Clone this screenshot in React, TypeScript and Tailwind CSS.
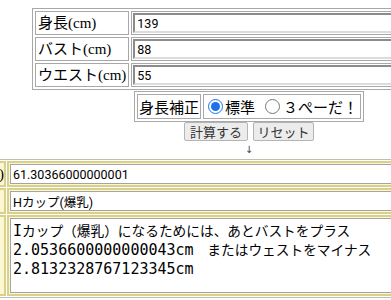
const fields: [string, string][] = [
  ["身長(cm)", "139"],
  ["バスト(cm)", "88"],
  ["ウエスト(cm)", "55"],
];

function J({ children }: { children: React.ReactNode }) {
  return <span className="text-[13.7px]">{children}</span>;
}

export default function App() {
  return (
    <div className="w-[391px] h-[300px] overflow-hidden bg-white text-black">
      <div className="w-[498px] flex flex-col items-center pt-[8px]">
        {/* input table */}
        <table className="w-[434px] border border-[#a8a8a8] border-separate border-spacing-[2px]">
          <tbody>
            {fields.map(([label, value]) => (
              <tr key={label}>
                <td className="w-[94px] h-[24px] border border-[#a8a8a8] px-[2px] py-0 whitespace-nowrap text-[15px] leading-[20px] font-['Liberation_Serif','Noto_Sans_CJK_JP',serif]">
                  {label}
                </td>
                <td className="h-[24px] border border-[#a8a8a8] p-[1px]">
                  <input
                    readOnly
                    value={value}
                    className="block w-full h-[20px] border-2 border-t-[#8c8c8c] border-l-[#8c8c8c] border-b-[#dcdcdc] border-r-[#dcdcdc] bg-white px-[2px] text-[12.5px] font-['Roboto','Noto_Sans_CJK_JP',sans-serif] outline-none"
                  />
                </td>
              </tr>
            ))}
          </tbody>
        </table>

        {/* height correction */}
        <table className="mt-[1px] border border-[#a8a8a8] border-separate border-spacing-[2px]">
          <tbody>
            <tr>
              <td className="h-[25px] border border-[#a8a8a8] px-[1px] py-0 whitespace-nowrap text-[15px] leading-[20px] font-['Noto_Sans_CJK_JP',sans-serif]">
                身長補正
              </td>
              <td className="h-[25px] border border-[#a8a8a8] pl-[4px] pr-[2px] py-0">
                <div className="flex items-center whitespace-nowrap text-[15px] leading-[20px] font-['Noto_Sans_CJK_JP',sans-serif]">
                  <input type="radio" name="hosei" defaultChecked className="w-[15px] h-[15px] m-0 accent-[#1a73e8]" />
                  <span className="ml-[2px]">標準</span>
                  <input type="radio" name="hosei" className="ml-[10px] w-[15px] h-[15px] m-0" />
                  <span className="ml-[3px]">３ぺーだ！</span>
                </div>
              </td>
            </tr>
          </tbody>
        </table>

        <div className="flex gap-[5px] font-['Noto_Sans_CJK_JP',sans-serif] text-[13px]">
          <button className="h-[19px] w-[64px] leading-[17px] border border-[#b4b4b4] rounded-[2px] bg-[#ececec] text-[#333]">
            計算する
          </button>
          <button className="h-[19px] w-[61px] leading-[17px] border border-[#b4b4b4] rounded-[2px] bg-[#ececec] text-[#333]">
            リセット
          </button>
        </div>

        <div className="h-[18px] text-[10px] leading-[18px] text-[#444] font-['DejaVu_Sans',sans-serif]">↓</div>

        {/* result table */}
        <table className="self-start -ml-[96px] w-[640px] border border-[#bdbdb0] bg-white border-separate border-spacing-[1px]">
          <tbody>
            <tr>
              <td className="w-[100px] border-2 border-[#d9d089] bg-[#fbf7d2] p-0 text-right whitespace-nowrap text-[15px] leading-[20px] font-['Liberation_Serif','Noto_Sans_CJK_JP',serif]">
                アンダー(cm)
              </td>
              <td className="border-2 border-[#d9d089] bg-[#fbf7d2] p-[1px]">
                <input
                  readOnly
                  value="61.30366000000001"
                  className="block w-full h-[20px] border border-[#a4a4a4] bg-white px-[2px] text-[12.5px] font-['Roboto','Noto_Sans_CJK_JP',sans-serif] outline-none"
                />
              </td>
            </tr>
            <tr>
              <td className="w-[100px] border-2 border-[#d9d089] bg-[#fbf7d2] p-0"></td>
              <td className="border-2 border-[#d9d089] bg-[#fbf7d2] p-[1px]">
                <input
                  readOnly
                  value="Hカップ(爆乳)"
                  className="block w-full h-[20px] border border-[#a4a4a4] bg-white px-[2px] text-[12.5px] font-['Roboto','Noto_Sans_CJK_JP',sans-serif] outline-none"
                />
              </td>
            </tr>
            <tr>
              <td className="w-[100px] border-2 border-[#d9d089] bg-[#fbf7d2] p-0"></td>
              <td className="border-2 border-[#d9d089] bg-[#fbf7d2] p-[1px]">
                <div className="h-[75px] border border-[#a4a4a4] bg-white px-[2px] pt-[3px] text-[15px] leading-[19px] whitespace-pre font-['DejaVu_Sans_Mono','Noto_Sans_CJK_JP',monospace]">
                  <div>
                    I<J>カップ（爆乳）になるためには、あとバストをプラス</J>
                  </div>
                  <div>
                    2.0536600000000043cm<J>　またはウェストをマイナス</J>
                  </div>
                  <div>2.8132328767123345cm</div>
                </div>
              </td>
            </tr>
          </tbody>
        </table>
      </div>
    </div>
  );
}
